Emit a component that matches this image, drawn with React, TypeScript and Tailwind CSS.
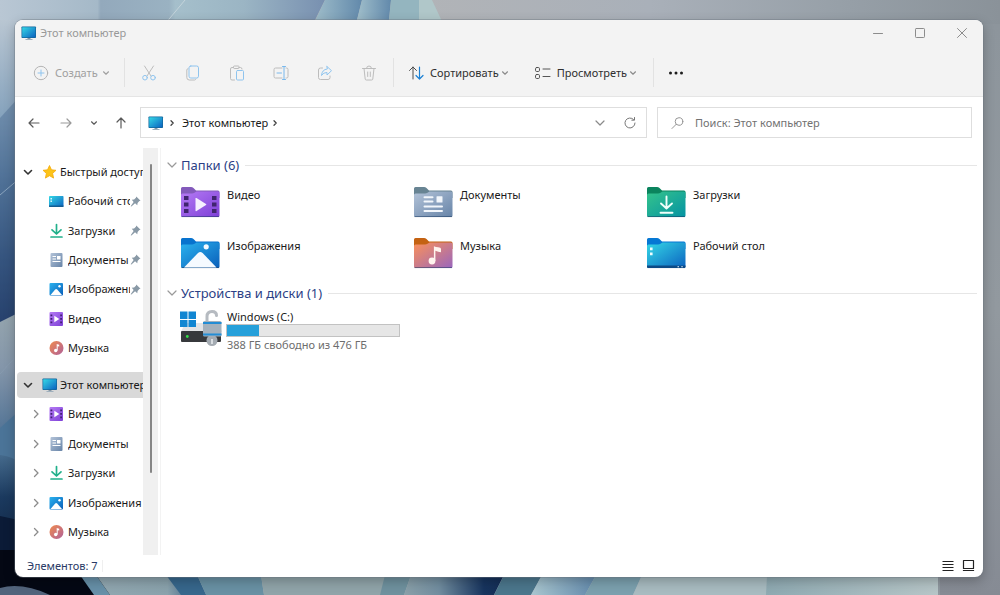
import type { ReactNode } from "react";

type Kind = "video" | "documents" | "downloads" | "pictures" | "music" | "desktop" | "star" | "computer";

/* ---------- shared gradients ---------- */

function Gradients() {
  const list: [string, string, string][] = [
    ["g-video", "#b57bf5", "#7d3fd6"],
    ["g-documents", "#b3c3d8", "#6784a8"],
    ["g-downloads", "#35c48b", "#0593a3"],
    ["g-pictures", "#2bb2ee", "#0a5fba"],
    ["g-music", "#fb9159", "#9a66bd"],
    ["g-desktop", "#35d8e6", "#0b62c0"],
    ["g-note", "#f08b4e", "#b0619a"],
  ];
  return (
    <svg className="absolute h-0 w-0" aria-hidden="true">
      <defs>
        {list.map(([id, from, to]) => (
          <linearGradient key={id} id={id} x1="0" y1="0" x2="1" y2="1">
            <stop offset="0" stopColor={from} />
            <stop offset="1" stopColor={to} />
          </linearGradient>
        ))}
      </defs>
    </svg>
  );
}

/* ---------- wallpaper ---------- */

function Wallpaper() {
  return (
    <svg
      className="absolute inset-0 h-full w-full"
      viewBox="0 0 1000 595"
      preserveAspectRatio="none"
      aria-hidden="true"
    >
      <defs>
        <linearGradient id="w-base" x1="0" y1="0" x2="1" y2="0">
          <stop offset="0.4" stopColor="#b2b4b7" />
          <stop offset="0.65" stopColor="#a9b0b9" />
          <stop offset="0.85" stopColor="#969fa7" />
          <stop offset="1" stopColor="#8a9299" />
        </linearGradient>
        <linearGradient id="w-right" x1="0" y1="0" x2="0" y2="1">
          <stop offset="0" stopColor="#8d959c" />
          <stop offset="0.5" stopColor="#92999f" />
          <stop offset="1" stopColor="#868b94" />
        </linearGradient>
        <linearGradient id="w-top" x1="0" y1="0" x2="1" y2="0">
          <stop offset="0" stopColor="#b9c7d4" />
          <stop offset="0.3" stopColor="#a5b9c8" />
          <stop offset="0.31" stopColor="#93a9bc" />
          <stop offset="0.52" stopColor="#9ab2c2" />
          <stop offset="0.54" stopColor="#a5bfcb" />
          <stop offset="0.75" stopColor="#9bb5c4" />
          <stop offset="1" stopColor="#7890b0" />
        </linearGradient>
        <linearGradient id="w-left" x1="0" y1="0" x2="0" y2="1">
          <stop offset="0" stopColor="#b9c6d2" />
          <stop offset="0.3" stopColor="#86a3bd" />
          <stop offset="0.5" stopColor="#5d7fa3" />
          <stop offset="0.75" stopColor="#37557f" />
          <stop offset="1" stopColor="#1d3360" />
        </linearGradient>
        <linearGradient id="w-mid" x1="0" y1="0" x2="0" y2="1">
          <stop offset="0" stopColor="#95a5ae" />
          <stop offset="0.35" stopColor="#8496aa" />
          <stop offset="1" stopColor="#36608a" />
        </linearGradient>
        <linearGradient id="w-dark" x1="0" y1="0" x2="0" y2="1">
          <stop offset="0" stopColor="#456a8c" />
          <stop offset="0.3" stopColor="#1b3a5f" />
          <stop offset="1" stopColor="#0a1730" />
        </linearGradient>
        <linearGradient id="w-petal" x1="0" y1="0" x2="1" y2="0">
          <stop offset="0" stopColor="#a9c6cf" />
          <stop offset="1" stopColor="#6289ab" />
        </linearGradient>
        <linearGradient id="w-blade" x1="0" y1="0" x2="1" y2="0">
          <stop offset="0" stopColor="#91a7b0" />
          <stop offset="0.65" stopColor="#8aa2ac" />
          <stop offset="1" stopColor="#1f4a78" />
        </linearGradient>
        <linearGradient id="w-navy" x1="0" y1="0" x2="1" y2="0">
          <stop offset="0" stopColor="#8aa0a9" />
          <stop offset="0.35" stopColor="#718d9f" />
          <stop offset="0.8" stopColor="#17345e" />
          <stop offset="1" stopColor="#142d55" />
        </linearGradient>
        <linearGradient id="w-pale" x1="0" y1="0" x2="1" y2="0">
          <stop offset="0" stopColor="#8ea9b1" />
          <stop offset="1" stopColor="#b6c5c7" />
        </linearGradient>
      </defs>
      <rect width="1000" height="595" fill="url(#w-base)" />
      <rect x="940" y="24" width="60" height="571" fill="url(#w-right)" />
      <path d="M0 0H325L300 50H0Z" fill="url(#w-top)" />
      <path d="M185 0L165 24" stroke="#c3d3da" strokeWidth="1" />
      <path d="M325 0H362L352 40H306Z" fill="url(#w-petal)" />
      <path d="M362 0H391L387 40H352Z" fill="url(#w-petal)" />
      <path d="M391 0H420V40H387Z" fill="#94b5bf" />
      <path d="M419 0H432L446 30H419Z" fill="#b0c7c9" />
      <path d="M0 20H60V340H0Z" fill="url(#w-left)" />
      <path d="M0 118L20 96V330H0Z" fill="#31527e" fillOpacity="0.3" />
      <path d="M0 195L20 178" stroke="#8aa4be" strokeWidth="1" />
      <path d="M0 322L20 312V470H0Z" fill="url(#w-mid)" />
      <path d="M0 374L20 352" stroke="#8ea1b5" strokeOpacity="0.5" />
      <path d="M0 428L20 410V470H0Z" fill="#4b7498" />
      <path d="M0 455Q12 456 22 464V595H0Z" fill="url(#w-dark)" />
      <path d="M0 516Q12 518 22 522V595H0Z" fill="#0b1b37" />
      <path d="M0 550H110V595H0Z" fill="#040814" />
      <path d="M0 588Q22 582 50 595H0Z" fill="#52647c" />
      <path d="M80 575H96L110 595H94Z" fill="#6790a8" />
      <path d="M96 575H197L206 595H110Z" fill="url(#w-blade)" />
      <path d="M166 575H197L206 595H181Z" fill="#37678c" />
      <path d="M197 575H261L264 595H206Z" fill="#6991a4" />
      <path d="M261 575H411L404 595H264Z" fill="#90a4a9" />
      <path d="M385 575H411L404 595H380Z" fill="#6f919e" />
      <path d="M411 575H504L494 595H404Z" fill="url(#w-navy)" />
      <path d="M504 575H542L531 595H494Z" fill="#4b768c" />
      <path d="M542 575H596L585 595H531Z" fill="url(#w-petal)" />
      <path d="M596 575H642L633 595H585Z" fill="#7ba0ae" />
      <path d="M642 575H767V595H633Z" fill="#a8bbc0" />
      <path d="M767 575H938V595H766Z" fill="url(#w-pale)" />
    </svg>
  );
}

/* ---------- icons ---------- */

function Stroke({ size = 16, className = "", width = 1, children }: { size?: number; className?: string; width?: number; children: ReactNode }) {
  return (
    <svg
      width={size}
      height={size}
      viewBox={`0 0 ${size} ${size}`}
      fill="none"
      stroke="currentColor"
      strokeWidth={width}
      strokeLinecap="round"
      strokeLinejoin="round"
      className={`shrink-0 ${className}`}
      aria-hidden="true"
    >
      {children}
    </svg>
  );
}

function ChevronDown({ className = "", wide = false }: { className?: string; wide?: boolean }) {
  return (
    <Stroke size={12} className={className} width={1.2}>
      <path d={wide ? "M2 4l4 4 4-4" : "M3.500 4.800L6 7.200l2.500-2.400"} />
    </Stroke>
  );
}

function ChevronRight({ className = "", small = false }: { className?: string; small?: boolean }) {
  return (
    <Stroke size={12} className={className} width={1.3}>
      <path d={small ? "M5 3.800L7.200 6 5 8.200" : "M4.500 2.500L8 6l-3.500 3.500"} />
    </Stroke>
  );
}

function Computer() {
  return (
    <svg width="16" height="16" viewBox="0 0 16 16" className="shrink-0" aria-hidden="true">
      <path d="M6.500 12.500h3v1.500h-3z" fill="#8696a3" />
      <path d="M4.500 14h7v.9h-7z" fill="#9fb0bd" />
      <rect x="0.500" y="1.500" width="14.500" height="11.500" rx="0.800" fill="#12669b" />
      <rect x="1.200" y="2.200" width="13.100" height="10.100" rx="0.300" fill="url(#g-desktop)" />
    </svg>
  );
}

function SmallIcon({ kind }: { kind: Kind }) {
  if (kind === "computer") return <Computer />;
  return (
    <svg width="16" height="16" viewBox="0 0 16 16" className="shrink-0" aria-hidden="true">
      {kind === "star" && (
        <path
          d="M7.500 1.500l2 4.300 4.500.5-3.400 3.100 1 4.700-4.100-2.400-4.100 2.400 1-4.700L1 6.300l4.500-.5z"
          fill="#fcc419"
          stroke="#f5a90b"
          strokeWidth="0.800"
          strokeLinejoin="round"
        />
      )}
      {kind === "desktop" && (
        <>
          <rect x="0" y="3" width="14.500" height="11" rx="0.800" fill="url(#g-desktop)" />
          <path d="M0 12.600h14.500v.6q0 .8-.8.8H.8q-.8 0-.8-.8z" fill="#145d92" />
          <path d="M1.500 5h1.400v1.400H1.500zM1.500 7.600h1.400V9H1.500z" fill="#e8fcff" />
        </>
      )}
      {kind === "downloads" && (
        <path d="M7.500 1.500v9M3 6.800L7.500 11 12 6.800M2 14h11" fill="none" stroke="#21b08b" strokeWidth="1.700" strokeLinecap="round" strokeLinejoin="round" />
      )}
      {kind === "documents" && (
        <>
          <rect x="1.500" y="1" width="12" height="14" rx="1" fill="url(#g-documents)" />
          <path d="M3.500 4.500H7M3.500 7H7M3.500 9.500h8" stroke="#fff" strokeWidth="1.200" />
          <rect x="8" y="4" width="3.500" height="3.500" fill="#fff" />
        </>
      )}
      {kind === "pictures" && (
        <>
          <rect x="0.500" y="2" width="13.500" height="12.500" rx="1" fill="url(#g-pictures)" />
          <path d="M1.500 14L6.200 8.500q1-1 2 0l4.800 5.500z" fill="#fff" />
          <circle cx="10.500" cy="5.300" r="1.200" fill="#fff" />
        </>
      )}
      {kind === "video" && (
        <>
          <rect x="0.500" y="1" width="13.500" height="14" rx="1" fill="url(#g-video)" />
          <path d="M1.500 3.500h1.800v1.800H1.500zM1.500 7h1.800v1.800H1.500zM1.500 10.500h1.800v1.800H1.500zM11.200 3.500H13v1.800h-1.800zM11.200 7H13v1.800h-1.800zM11.200 10.500H13v1.800h-1.800z" fill="#422075" />
          <path d="M5.300 4.800l5 3.200-5 3.200z" fill="#fff" />
        </>
      )}
      {kind === "music" && (
        <>
          <circle cx="7.500" cy="8" r="7" fill="url(#g-note)" />
          <circle cx="6.700" cy="10.500" r="1.700" fill="#fff" />
          <path d="M7.700 10.500V4l2.500.8v1.800l-1.500-.4v4.300z" fill="#fff" />
        </>
      )}
    </svg>
  );
}

const tabColor: Record<string, string> = {
  video: "#835abb",
  documents: "#688493",
  downloads: "#0b845e",
  pictures: "#0873ce",
  music: "#c46212",
  desktop: "#0678d4",
};

function FolderIcon({ kind }: { kind: Kind }) {
  return (
    <svg width="40" height="32" viewBox="0 0 40 32" className="shrink-0" aria-hidden="true">
      <path d="M1 2.500Q1 1 2.500 1H11q1.500 0 2.500 1l2.500 2.600H38q1.500 0 1.500 1.500V12H1z" fill={tabColor[kind]} />
      <path d="M1 9q0-1.500 1.500-1.500H12q1.500 0 2.500-.8L16.500 5.400H38q1.500 0 1.500 1.500V29.500q0 1.500-1.500 1.500H2.500Q1 31 1 29.500z" fill={`url(#g-${kind})`} />
      <path d="M1.500 30.600h37.500" stroke="#17365f" strokeOpacity="0.600" strokeWidth="0.900" />
      {kind === "video" && (
        <>
          <path d="M4 10h4.500v4H4zM4 16.500h4.500v4H4zM4 23h4.500v4H4zM32 10h4.500v4H32zM32 16.500h4.500v4H32zM32 23h4.500v4H32z" fill="#40246f" />
          <path d="M15.500 12.500q0-1 1-.4l9.500 6q.7.500 0 1l-9.500 6q-1 .5-1-.5z" fill="#f6f0ff" />
        </>
      )}
      {kind === "documents" && (
        <>
          <path d="M11.500 11.200h8M11.500 15.600h8M11.500 20.400h17.500M11.500 25h17.500" stroke="#f2f6fb" strokeWidth="2" strokeLinecap="round" />
          <rect x="23.500" y="10.200" width="6" height="6.300" rx="0.500" fill="#f2f6fb" />
        </>
      )}
      {kind === "downloads" && (
        <path d="M20.500 10.500V22M15 17.500l5.500 5 5.500-5M14.500 26.700h12" fill="none" stroke="#f1fffb" strokeWidth="1.900" strokeLinecap="round" strokeLinejoin="round" />
      )}
      {kind === "pictures" && (
        <>
          <path d="M4 30.500L18 16q2.300-2.200 4.600 0L36.500 30.500z" fill="#f5faff" />
          <circle cx="26.200" cy="9.800" r="2.600" fill="#f5faff" />
        </>
      )}
      {kind === "music" && (
        <>
          <circle cx="19" cy="24" r="3.400" fill="#fff4ee" />
          <path d="M20.900 24V9.200q2 1 4.200 1 2.900 0 2.900 1.500v3.500q-2.800-.5-5.600-1.500V24z" fill="#fff4ee" />
        </>
      )}
      {kind === "desktop" && (
        <>
          <path d="M1 28.500h38.500v1q0 1.500-1.500 1.500H2.500Q1 31 1 29.500z" fill="#0c4a86" />
          <path d="M4 10.500h2.600v2.800H4zM4 15.500h2.600v2.800H4z" fill="#effeff" />
          <path d="M31.500 29.300h1.500v1h-1.500zM35.300 29.300h1.500v1h-1.500z" fill="#e3f2ff" />
        </>
      )}
    </svg>
  );
}

function DriveIcon() {
  return (
    <svg width="42" height="38" viewBox="0 0 42 38" className="shrink-0" aria-hidden="true">
      <path d="M5 14h34l3 9H1z" fill="#e3e4e6" />
      <rect x="1" y="22" width="40" height="11" rx="1" fill="#37393c" />
      <circle cx="7.300" cy="27.500" r="1.400" fill="#35e04a" />
      <path d="M0 2.500h7.500V10H0zM8.500 2.500H16V10H8.500zM0 11h7.500v7H0zM8.500 11H16v7H8.500z" fill="#1186d2" />
      <path d="M27 13V7.500q0-5 5-5 4.500 0 4.500 4" fill="none" stroke="#b6bbc1" strokeWidth="3" strokeLinecap="round" />
      <circle cx="32" cy="31.500" r="5.500" fill="#a4abb2" />
      <rect x="23" y="12" width="18.500" height="15.500" rx="1.500" fill="#a5b1bc" />
      <path d="M23 13h18.500v2H23zM23 24.500h18.500v2H23z" fill="#238dd5" />
      <path d="M31 30h2v5h-2z" fill="#d9dde1" />
    </svg>
  );
}

function Pin() {
  return (
    <svg width="11" height="11" viewBox="0 0 10 10" className="shrink-0" aria-hidden="true">
      <path d="M5.700.4L9.600 4.300 8.500 4.600 6.900 6.300 6.600 8.400 4.600 6.700 1.300 9.500.6 9.300 3.300 5.400 1.600 3.500 3.700 3.100 5.400 1.500z" fill="#8999a6" />
    </svg>
  );
}

/* ---------- toolbar ---------- */

function Divider() {
  return <span className="h-[29px] w-px shrink-0 bg-[#e2e2e2]" />;
}

const editTools: { label: string; icon: ReactNode }[] = [
  {
    label: "Вырезать",
    icon: (
      <>
        <path d="M3.500 1L10 11M12.500 1L6 11" />
        <g stroke="#8fc4ee"><circle cx="4" cy="12.700" r="2.300" /><circle cx="12" cy="12.700" r="2.300" /></g>
      </>
    ),
  },
  {
    label: "Копировать",
    icon: (
      <>
        <path d="M3 3.500q-1.200.5-1.200 1.500v7.500q0 2.500 2.500 2.500h5.200q1 0 1.500-1" />
        <rect x="4" y="1" width="9.500" height="12" rx="1.800" stroke="#8fc4ee" />
      </>
    ),
  },
  {
    label: "Вставить",
    icon: (
      <>
        <path d="M4.500 2.500h-1.500q-1.500 0-1.500 1.500v9.500q0 1.500 1.500 1.500h2.500M10 2.500h1.500q1.500 0 1.500 1.500M4.500 1.700q0-.7.700-.7h4.100q.7 0 .7.700v1.100q0 .7-.7.700H5.200q-.7 0-.7-.7z" />
        <rect x="7.500" y="5.500" width="7" height="9.500" rx="1" stroke="#8fc4ee" />
      </>
    ),
  },
  {
    label: "Переименовать",
    icon: (
      <>
        <path d="M9 3H2.500Q1 3 1 4.500v7Q1 13 2.500 13H9M13 3h.500Q15 3 15 4.500v7q0 1.500-1.500 1.500H13" />
        <path d="M11 1.500v13M9.500 1.500h3M9.500 14.500h3M4 8h4.500" stroke="#79b8ec" />
      </>
    ),
  },
  {
    label: "Поделиться",
    icon: (
      <>
        <path d="M5.500 3H3.500Q1.500 3 1.500 5v7.500q0 2 2 2H11q2 0 2-2V11" />
        <path d="M10 1.500l4.500 4.200L10 10V7.500Q6.500 7.300 4.500 10.500 5 4.500 10 4z" stroke="#8fc4ee" />
      </>
    ),
  },
  {
    label: "Удалить",
    icon: <path d="M1.500 3.500h13M5.500 3.500Q5.500 1 8 1t2.500 2.500M3 3.500L4.200 14q.1 1 1.100 1h5.400q1 0 1.100-1L13 3.500M6.700 7v4.500M9.300 7v4.500" />,
  },
];

function Toolbar() {
  return (
    <div className="flex h-12 items-center border-b border-[#e5e5e5] pl-4" role="toolbar" aria-label="Панель команд">
      <button className="flex w-[93px] items-center text-[#a0a0a0]">
        <Stroke size={20} className="text-[#b4b4b4]">
          <circle cx="10" cy="10" r="6.700" />
          <path d="M10 7v6M7 10h6" stroke="#8fc4ee" />
        </Stroke>
        <span className="mr-0.5 ml-1">Создать</span>
        <ChevronDown />
      </button>
      <Divider />
      <div className="ml-0.5 flex">
        {editTools.map((tool) => (
          <button key={tool.label} aria-label={tool.label} className="flex w-11 justify-center text-[#bcbcbc]">
            <Stroke>{tool.icon}</Stroke>
          </button>
        ))}
      </div>
      <span className="ml-0.5 flex">
        <Divider />
      </span>
      <button className="ml-3.5 flex items-center text-[#303030]">
        <Stroke className="mr-1.5">
          <path d="M5 14V2M1.500 5.500L5 2l3.500 3.500" stroke="#4d4d4d" />
          <path d="M11.500 2v12M8 10.500l3.500 3.500 3.500-3.500" stroke="#1a80d4" strokeWidth="1.200" />
        </Stroke>
        Сортировать
        <ChevronDown className="text-[#8c8c8c]" />
      </button>
      <button className="ml-6 flex items-center text-[#303030]">
        <Stroke className="mr-1.5 text-[#555555]">
          <rect x="0.500" y="2.500" width="4" height="4" rx="1.200" />
          <rect x="0.500" y="9.500" width="4" height="4" rx="1.200" />
          <path d="M8 4h7M8 11.500h7" />
        </Stroke>
        Просмотреть
        <ChevronDown className="mr-3.5 text-[#8c8c8c]" />
      </button>
      <Divider />
      <button aria-label="Дополнительно" className="flex w-11 justify-center">
        <Stroke>
          <g fill="#1d1d1d" stroke="none"><circle cx="2.500" cy="8" r="1.500" /><circle cx="8" cy="8" r="1.500" /><circle cx="13.500" cy="8" r="1.500" /></g>
        </Stroke>
      </button>
    </div>
  );
}

/* ---------- sidebar ---------- */

type Entry = { kind: Kind; label: string; pinned?: boolean };

const quick: Entry[] = [
  { kind: "desktop", label: "Рабочий стол", pinned: true },
  { kind: "downloads", label: "Загрузки", pinned: true },
  { kind: "documents", label: "Документы", pinned: true },
  { kind: "pictures", label: "Изображения", pinned: true },
  { kind: "video", label: "Видео" },
  { kind: "music", label: "Музыка" },
];

const computer: Entry[] = [
  { kind: "video", label: "Видео" },
  { kind: "documents", label: "Документы" },
  { kind: "downloads", label: "Загрузки" },
  { kind: "pictures", label: "Изображения" },
  { kind: "music", label: "Музыка" },
];

function RootRow({ kind, label, selected = false }: { kind: Kind; label: string; selected?: boolean }) {
  return (
    <li className="flex min-w-0 items-center">
      <button className={`flex h-[26px] w-full items-center overflow-hidden rounded-l-sm pl-[5px] ${selected ? "bg-[#d9d9d9]" : ""}`}>
        <Stroke size={12} width={1.6} className="mr-2 text-[#333333]">
          <path d="M2.500 4.500L6 8l3.500-3.500" />
        </Stroke>
        <SmallIcon kind={kind} />
        <span className="ml-0.5 whitespace-nowrap">{label}</span>
      </button>
    </li>
  );
}

function ChildRow({ entry, expandable = false }: { entry: Entry; expandable?: boolean }) {
  return (
    <li className="flex min-w-0 items-center">
      <button className="flex h-[26px] w-full items-center overflow-hidden pl-[13px]">
        <span className="mr-[7px] flex w-3 shrink-0">{expandable && <ChevronRight className="text-[#8b8b8b]" />}</span>
        <SmallIcon kind={entry.kind} />
        <span className="ml-[3px] min-w-0 flex-1 overflow-hidden text-left whitespace-nowrap">{entry.label}</span>
        {entry.pinned && (
          <span className="mr-0.5 flex">
            <Pin />
          </span>
        )}
      </button>
    </li>
  );
}

function Sidebar() {
  return (
    <nav className="flex w-[146px] shrink-0 border-r border-[#f3f3f3]" aria-label="Область навигации">
      <div className="flex min-w-0 flex-1 flex-col gap-[7px] pt-[9px] pl-0.5">
        <ul className="grid h-[206px] auto-rows-fr grid-cols-1">
          <RootRow kind="star" label="Быстрый доступ" />
          {quick.map((entry) => (
            <ChildRow key={entry.label} entry={entry} />
          ))}
        </ul>
        <ul className="grid h-[177px] auto-rows-fr grid-cols-1">
          <RootRow kind="computer" label="Этот компьютер" selected />
          {computer.map((entry) => (
            <ChildRow key={entry.label} entry={entry} expandable />
          ))}
        </ul>
      </div>
      <div className="mr-0.5 flex w-[15px] shrink-0 justify-center bg-[#f0f0f0] pt-4 pb-[82px]">
        <span className="w-0.5 rounded-full bg-[#858585]" />
      </div>
    </nav>
  );
}

/* ---------- content ---------- */

const folders: Entry[] = [
  { kind: "video", label: "Видео" },
  { kind: "documents", label: "Документы" },
  { kind: "downloads", label: "Загрузки" },
  { kind: "pictures", label: "Изображения" },
  { kind: "music", label: "Музыка" },
  { kind: "desktop", label: "Рабочий стол" },
];

function GroupTitle({ children }: { children: ReactNode }) {
  return (
    <div className="flex h-5 items-center">
      <ChevronDown wide className="mr-[3px] text-[#9a9a9a]" />
      <h2 className="mr-1.5 text-[13px] text-[#2b3f86]">{children}</h2>
      <span className="h-px flex-1 bg-[#e6e6e6]" />
    </div>
  );
}

function Content() {
  const total = 476;
  const free = 388;
  return (
    <main className="min-w-0 flex-1 pt-[7px] pr-1.5 pl-[5px]">
      <GroupTitle>Папки (6)</GroupTitle>
      <ul className="mb-3.5 grid grid-cols-[repeat(auto-fill,233px)] gap-y-[19px] pt-[11px] pl-3.5">
        {folders.map((folder) => (
          <li key={folder.label} className="flex h-8">
            <button className="flex items-start text-left">
              <FolderIcon kind={folder.kind} />
              <span className="ml-[7px] pt-px">{folder.label}</span>
            </button>
          </li>
        ))}
      </ul>
      <GroupTitle>Устройства и диски (1)</GroupTitle>
      <button className="mt-1.5 ml-3.5 flex text-left">
        <DriveIcon />
        <span className="ml-1 flex flex-col">
          <span className="pl-px leading-[15px]">Windows (C:)</span>
          <span role="meter" aria-label="Занято" aria-valuemin={0} aria-valuemax={total} aria-valuenow={total - free} className="flex h-[13px] w-[174px] border border-[#c2c2c2] bg-[#e6e6e6]">
            <span className="bg-[#26a0da]" style={{ width: `${((total - free) / total) * 100}%` }} />
          </span>
          <span className="pl-px leading-4 text-[#6d6d6d]">388 ГБ свободно из 476 ГБ</span>
        </span>
      </button>
    </main>
  );
}

/* ---------- window ---------- */

export default function App() {
  return (
    <div className="relative flex min-h-screen flex-col bg-[#8f979f] pt-5 pr-[17px] pb-[18px] pl-[15px] font-['Noto_Sans','Open_Sans',sans-serif] text-[11px] leading-4 text-[#1a1a1a]">
      <Gradients />
      <Wallpaper />
      <section className="relative flex flex-1 flex-col overflow-hidden rounded-lg bg-white shadow-[0_0_0_1px_rgba(110,120,130,0.4),0_4px_12px_rgba(0,0,0,0.25)]">
        <header className="bg-[#f3f3f3]">
          <div className="flex h-[29px] items-start pl-1.5">
            <div className="flex items-center pt-[5px]">
              <Computer />
              <h1 className="ml-[3px] text-[#999999]">Этот компьютер</h1>
            </div>
            <div className="ml-auto flex text-[#8c8c8c]">
              <button aria-label="Свернуть" className="flex h-[26px] w-[42px] items-center justify-center">
                <Stroke size={12}><path d="M1.500 6.500h9" /></Stroke>
              </button>
              <button aria-label="Развернуть" className="flex h-[26px] w-[42px] items-center justify-center">
                <Stroke size={12}><rect x="1.500" y="1.500" width="9" height="9" rx="0.800" /></Stroke>
              </button>
              <button aria-label="Закрыть" className="flex h-[26px] w-[42px] items-center justify-center">
                <Stroke size={12}><path d="M1.500 1.500l9 9M10.500 1.500l-9 9" /></Stroke>
              </button>
            </div>
          </div>
          <Toolbar />
        </header>

        <div className="flex items-center pt-[10px] pr-[11px] pb-2.5">
          <div className="flex w-[125px] shrink-0 items-center pl-[11px]">
            <button aria-label="Назад" className="text-[#5a5a5a]">
              <Stroke width={1.2}><path d="M13 8H3M7 4L3 8l4 4" /></Stroke>
            </button>
            <button aria-label="Вперёд" className="ml-4 text-[#9a9a9a]">
              <Stroke width={1.2}><path d="M3 8h10M9 4l4 4-4 4" /></Stroke>
            </button>
            <button aria-label="Последние расположения" className="ml-3.5 text-[#5a5a5a]">
              <ChevronDown />
            </button>
            <button aria-label="Вверх" className="ml-[13px] text-[#5a5a5a]">
              <Stroke width={1.2}><path d="M8 13V3M4 7l4-4 4 4" /></Stroke>
            </button>
          </div>
          <div className="flex h-[31px] min-w-0 flex-1 items-center border border-[#dedede] pl-[7px]">
            <Computer />
            <ChevronRight small className="ml-0.5 text-[#444444]" />
            <button className="mr-px ml-1">Этот компьютер</button>
            <ChevronRight small className="text-[#444444]" />
            <button aria-label="Предыдущие расположения" className="mr-4 ml-auto text-[#8a8a8a]">
              <ChevronDown wide />
            </button>
            <button aria-label="Обновить" className="mr-2 text-[#777777]">
              <Stroke>
                <path d="M13 8a5 5 0 1 1-1.500-3.600M12.500 2.500v2.700H9.800" />
              </Stroke>
            </button>
          </div>
          <label className="ml-2.5 flex h-[31px] w-[315px] shrink-0 items-center border border-[#dedede] pl-3">
            <Stroke className="text-[#969696]">
              <circle cx="9" cy="6.500" r="3.800" />
              <path d="M6.200 9.300L2 13.500" />
            </Stroke>
            <input type="search" aria-label="Поиск: Этот компьютер" placeholder="Поиск: Этот компьютер" className="ml-[9px] min-w-0 flex-1 outline-none placeholder:text-[#727272]" />
          </label>
        </div>

        <div className="flex min-h-0 flex-1">
          <Sidebar />
          <Content />
        </div>

        <footer className="flex h-[22px] items-center pr-[7px] pl-3">
          <span className="text-[#2a3a66]">Элементов: 7</span>
          <span className="ml-1 h-3 w-px bg-[#efefef]" />
          <div className="ml-auto flex gap-1 text-[#222222]">
            <button aria-label="Таблица">
              <Stroke><path d="M3 3.500h10M3 6.500h10M3 9.500h10M3 12.500h10" strokeLinecap="square" /></Stroke>
            </button>
            <button aria-label="Крупные значки">
              <Stroke><path d="M3.500 2.500h10v8h-10zM3.500 12.500h10" strokeWidth="1.200" strokeLinecap="square" /></Stroke>
            </button>
          </div>
        </footer>
      </section>
    </div>
  );
}
